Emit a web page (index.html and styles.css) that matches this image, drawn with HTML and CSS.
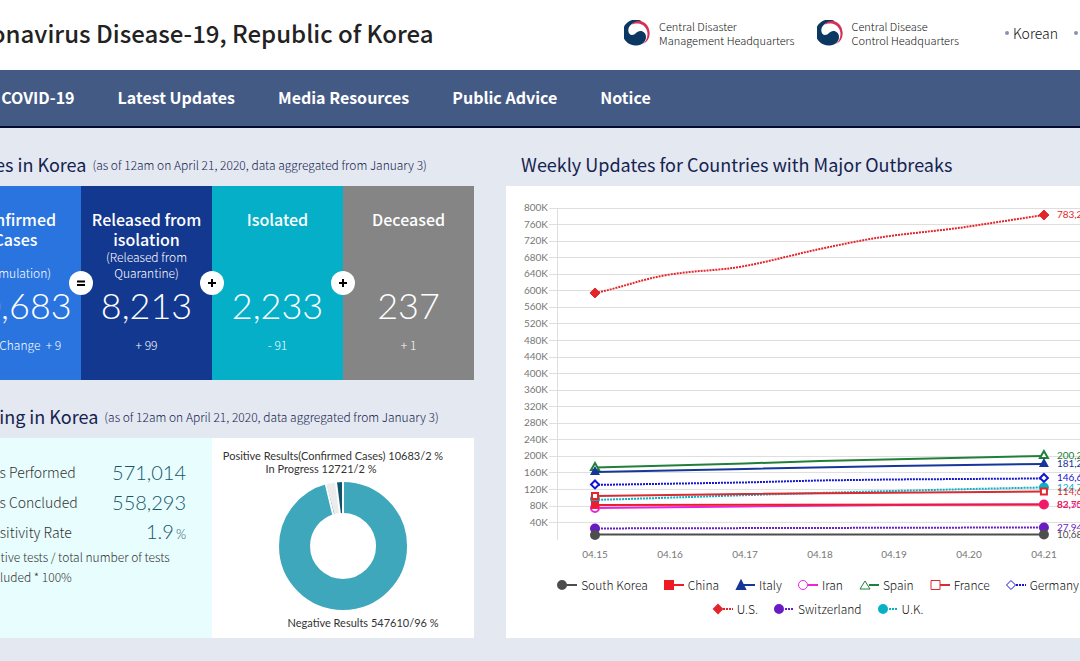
FILE: index.html
```html
<!DOCTYPE html>
<html lang="en">
<head>
<meta charset="utf-8">
<title>Coronavirus Disease-19, Republic of Korea</title>
<link rel="stylesheet" href="styles.css">
</head>
<body>
<svg class="defs" aria-hidden="true">
  <symbol id="taegeuk" viewBox="0 0 26 26">
    <path fill="#0b3763" d="M17 .7A13 13 0 1 0 12.500 25.500C18 25.500 22 21.500 22 17C22 13.500 19.500 11 16.300 11C12.500 11 11.500 15 8 15C6 15 4.300 13 4.300 10.500C4.300 5.500 9 2.200 13.500 2C15 1.500 16 1 17 .7Z"/>
    <path fill="#d62f56" d="M7.500 4.600C10 1.600 14 .7 17 .9A12.800 12.800 0 0 1 18.500 24.500C21.500 22 23.500 18.500 23.500 14C23.500 8 19 3.600 14 3.400C11.500 3.300 9 3.800 7.500 4.600Z"/>
  </symbol>
</svg>

<header class="top">
  <div class="wrap top-row">
    <h1>Coronavirus Disease-19, Republic of Korea</h1>
    <div class="agencies">
      <a class="agency" href="#"><svg><use href="#taegeuk"/></svg><span>Central Disaster<br>Management Headquarters</span></a>
      <a class="agency" href="#"><svg><use href="#taegeuk"/></svg><span>Central Disease<br>Control Headquarters</span></a>
    </div>
    <ul class="langs">
      <li><a href="#">Korean</a></li>
      <li><a href="#">Chinese</a></li>
    </ul>
  </div>
</header>

<nav class="nav">
  <div class="wrap nav-row">
    <a href="#">About COVID-19</a>
    <a href="#">Latest Updates</a>
    <a href="#">Media Resources</a>
    <a href="#">Public Advice</a>
    <a href="#">Notice</a>
  </div>
</nav>

<main class="wrap board">
  <div class="col">
    <section>
      <div class="heading"><h2>Cases in Korea</h2><p>(as of 12am on April 21, 2020, data aggregated from January 3)</p></div>
      <div class="cards">
        <article class="card blue">
          <div class="card-head"><h3>Confirmed<br>Cases</h3><p>(Cumulation)</p></div>
          <strong>10,683</strong><span>Daily Change &nbsp;+ 9</span>
          <svg class="op" viewBox="0 0 24 24"><path d="M8 10.500h8M8 14h8"/></svg>
        </article>
        <article class="card navy">
          <div class="card-head"><h3>Released from isolation</h3><p>(Released from Quarantine)</p></div>
          <strong>8,213</strong><span>+ 99</span>
          <svg class="op" viewBox="0 0 24 24"><path d="M8 12h8M12 8v8"/></svg>
        </article>
        <article class="card cyan">
          <div class="card-head"><h3>Isolated</h3></div>
          <strong>2,233</strong><span>- 91</span>
          <svg class="op" viewBox="0 0 24 24"><path d="M8 12h8M12 8v8"/></svg>
        </article>
        <article class="card gray">
          <div class="card-head"><h3>Deceased</h3></div>
          <strong>237</strong><span>+ 1</span>
        </article>
      </div>
    </section>

    <section>
      <div class="heading"><h2>Testing in Korea</h2><p>(as of 12am on April 21, 2020, data aggregated from January 3)</p></div>
      <div class="testing">
        <div class="tests">
          <dl>
            <div><dt>Tests Performed</dt><dd>571,014</dd></div>
            <div><dt>Tests Concluded</dt><dd>558,293</dd></div>
            <div><dt>* Positivity Rate</dt><dd>1.9<small>%</small></dd></div>
          </dl>
          <p>Postitive tests / total number of tests concluded * 100%</p>
        </div>
        <div class="donut">
          <svg viewBox="0 0 262 200" role="img" aria-label="Test results">
            <text x="121" y="22">Positive Results(Confirmed Cases) 10683/2 %</text>
            <text x="109" y="35">In Progress 12721/2 %</text>
            <g fill="none" stroke-width="31" transform="rotate(-90 131 108)">
              <circle cx="131" cy="108" r="48.500" stroke="#3ea7bb" pathLength="1000" stroke-dasharray="959 41"/>
              <circle cx="131" cy="108" r="48.500" stroke="#ececec" pathLength="1000" stroke-dasharray="0 959 23 18"/>
              <circle cx="131" cy="108" r="48.500" stroke="#0e5567" pathLength="1000" stroke-dasharray="0 982 18 0"/>
            </g>
            <path stroke="#fff" stroke-width="2" d="M131 77V43M128 77l-4-33M121.500 78l-8-33"/>
            <text x="151" y="189">Negative Results 547610/96 %</text>
          </svg>
        </div>
      </div>
    </section>
  </div>

  <section class="col weekly">
    <div class="heading"><h2>Weekly Updates for Countries with Major Outbreaks</h2></div>
    <div class="chart">
      <svg class="plot" viewBox="0 0 624 384" role="img" aria-label="Confirmed cases by country">
        <path class="grid" d="M43 22.500H600M43 38.500H600M43 55.500H600M43 71.500H600M43 88.500H600M43 104.500H600M43 121.500H600M43 137.500H600M43 154.500H600M43 171.500H600M43 187.500H600M43 204.500H600M43 220.500H600M43 237.500H600M43 253.500H600M43 270.500H600M43 286.500H600M43 303.500H600M43 320.500H600M43 336.500H600M51.500 22V354"/>
        <g class="ylab">
          <text x="42" y="25">800K</text><text x="42" y="42">760K</text><text x="42" y="58">720K</text><text x="42" y="75">680K</text>
          <text x="42" y="91">640K</text><text x="42" y="108">600K</text><text x="42" y="124">560K</text><text x="42" y="141">520K</text>
          <text x="42" y="158">480K</text><text x="42" y="174">440K</text><text x="42" y="191">400K</text><text x="42" y="207">360K</text>
          <text x="42" y="224">320K</text><text x="42" y="240">280K</text><text x="42" y="257">240K</text><text x="42" y="273">200K</text>
          <text x="42" y="290">160K</text><text x="42" y="307">120K</text><text x="42" y="323">80K</text><text x="42" y="340">40K</text>
        </g>
        <g class="xlab">
          <text x="89" y="372">04.15</text><text x="164" y="372">04.16</text><text x="239" y="372">04.17</text><text x="314" y="372">04.18</text>
          <text x="388" y="372">04.19</text><text x="463" y="372">04.20</text><text x="538" y="372">04.21</text>
        </g>
        <g class="line">
          <path class="dots" stroke="#08b1c4" d="M89 314C190 311 240 309 314 307S460 303 538 301.500"/>
          <path class="dots" stroke="#e3262c" d="M89 107C115 102 135 93 164 88.500S212 85 239 80S290 68 314 63S360 53 388 49.500S440 44 463 40.500L538 29"/>
          <path class="dots" stroke="#1414d2" d="M89 299L239 296.500L314 294.500L388 293.500L538 292.500"/>
          <path class="dots" stroke="#6a1cc4" d="M89 342.500L538 341.500"/>
          <path stroke="#20803a" d="M89 281.500L239 277.500L314 275L538 270"/>
          <path stroke="#16369a" d="M89 286L239 283L388 280L538 278"/>
          <path stroke="#d92b32" d="M89 310L239 308L538 305.500"/>
          <path stroke="#e625dd" d="M89 322L239 320.500L388 319L538 318.500"/>
          <path stroke="#ed1c2e" d="M89 319L538 318.500"/>
          <path stroke="#4d4d4d" d="M89 348.500H538"/>
        </g>
        <g stroke-width="2">
          <path fill="#e3262c" stroke="#e3262c" d="M89 102l5 5-5 5-5-5zM538 24l5 5-5 5-5-5z" stroke-width="1"/>
          <g fill="#08b1c4"><circle cx="89" cy="313" r="5"/><circle cx="538" cy="301.500" r="5"/></g>
          <path fill="#fff" stroke="#20803a" d="M89 277l4 7h-8zM538 265l4 7h-8z"/>
          <path fill="#16369a" d="M89 280l5 9H84zM538 272l5 9H533z"/>
          <path fill="#fff" stroke="#1414d2" d="M89 294.500l4 4-4 4-4-4zM538 288l4 4-4 4-4-4z"/>
          <circle cx="89" cy="322" r="4" fill="#fff" stroke="#e625dd"/><circle cx="538" cy="318.500" r="5" fill="#f31969"/>
          <path fill="#ed1c2e" d="M85 315h8v8H85z"/>
          <path fill="#fff" stroke="#e3262c" d="M86 307h6v6H86zM535 302.500h6v6H535z"/>
          <g fill="#6a1cc4"><circle cx="89" cy="342.500" r="5"/><circle cx="538" cy="341.500" r="5"/></g>
          <g fill="#4d4d4d"><circle cx="89" cy="349" r="5"/><circle cx="538" cy="348.500" r="5"/></g>
        </g>
        <g class="values">
          <text x="551" y="32" fill="#e3262c">783,290</text>
          <text x="551" y="273" fill="#20803a">200,210</text>
          <text x="551" y="281" fill="#16369a">181,228</text>
          <text x="551" y="295" fill="#1414d2">146,653</text>
          <text x="551" y="305" fill="#08b1c4">124,743</text>
          <text x="551" y="309" fill="#e3262c">114,657</text>
          <text x="551" y="322" fill="#e625dd">83,505</text>
          <text x="551" y="322" fill="#ed1c2e">82,758</text>
          <text x="551" y="345" fill="#6a1cc4">27,944</text>
          <text x="551" y="352" fill="#4d4d4d">10,683</text>
        </g>
      </svg>
      <ul class="legend">
        <li class="c-kr"><svg viewBox="0 0 20 12"><path d="M5 6h15"/><circle class="fill" cx="5" cy="6" r="4"/></svg>South Korea</li>
        <li class="c-cn"><svg viewBox="0 0 20 12"><path d="M5 6h15"/><path class="fill" d="M1 2h8v8H1z"/></svg>China</li>
        <li class="c-it"><svg viewBox="0 0 20 12"><path d="M5 6h15"/><path class="fill" d="M6 2l4 8H2z"/></svg>Italy</li>
        <li class="c-ir"><svg viewBox="0 0 20 12"><path d="M10 6h10"/><circle class="open" cx="5" cy="6" r="4.500"/></svg>Iran</li>
        <li class="c-es"><svg viewBox="0 0 20 12"><path d="M10 6h10"/><path class="open" d="M6 2l5 8H1z"/></svg>Spain</li>
        <li class="c-fr"><svg viewBox="0 0 20 12"><path d="M10 6h10"/><path class="open" d="M1 1.500h9v9H1z"/></svg>France</li>
        <li class="c-de"><svg viewBox="0 0 20 12"><path class="dash" d="M10 6h10"/><path class="open" d="M5 1.500L9.500 6 5 10.500.5 6z"/></svg>Germany</li>
        <li class="c-us"><svg viewBox="0 0 20 12"><path class="dash" d="M10 6h10"/><path class="fill" d="M5 2l4 4-4 4-4-4z"/></svg>U.S.</li>
        <li class="c-ch"><svg viewBox="0 0 20 12"><path class="dash" d="M11 6h9"/><circle class="fill" cx="5" cy="6" r="4"/></svg>Switzerland</li>
        <li class="c-uk"><svg viewBox="0 0 20 12"><path class="dash" d="M11 6h9"/><circle class="fill" cx="5" cy="6" r="4"/></svg>U.K.</li>
      </ul>
    </div>
  </section>
</main>
</body>
</html>
```
FILE: styles.css
```css
* { box-sizing: border-box; }
body {
  margin: 0;
  overflow: hidden;
  background: #e4e8f1;
  color: #111;
  font-family: "Noto Sans CJK KR", "Noto Sans", sans-serif;
}
h1, h2, h3, p, ul, dl, dd { margin: 0; padding: 0; }
ul { list-style: none; }
a { color: inherit; text-decoration: none; }
.defs { display: none; }
.wrap { margin: 0 -50px; }

.top { background: #fff; }
.top-row { display: flex; align-items: center; height: 70px; padding: 0 0 4px 1px; }
h1 { width: 673px; flex: none; color: #222; font-size: 24px; font-weight: 500; line-height: 36px; white-space: nowrap; }
.agencies { display: flex; gap: 22px; }
.agency { display: flex; align-items: center; gap: 9px; font-size: 11px; font-weight: 300; line-height: 14px; white-space: nowrap; }
.agency svg { width: 26px; height: 26px; }
.langs { display: flex; gap: 16px; margin-left: 46px; font-size: 14px; font-weight: 300; line-height: 20px; }
.langs li { display: flex; align-items: center; gap: 4px; }
.langs li::before { content: ""; width: 4px; height: 4px; border-radius: 50%; background: #8793b0; }

.nav { background: #435a85; border-bottom: 2px solid #020c2e; }
.nav-row { display: flex; align-items: center; gap: 43px; height: 56px; padding-bottom: 2px; color: #fff; font-size: 16px; font-weight: 700; white-space: nowrap; }

.board { display: grid; grid-template-columns: 21fr 25fr; gap: 32px; padding-top: 20px; }
.col { min-width: 0; }
.heading { display: flex; align-items: center; gap: 6px; height: 38px; padding: 0 0 6px 15px; color: #14234f; white-space: nowrap; }
h2 { font-size: 18px; font-weight: 400; }
.heading p { font-size: 12px; font-weight: 300; }

.cards { display: grid; grid-template-columns: repeat(4, minmax(0, 1fr)); margin-bottom: 20px; }
.card { position: relative; display: flex; flex-direction: column; align-items: center; height: 194px; padding: 23px 8px; color: #fff; text-align: center; }
.blue { background: #2a74e0; }
.navy { background: #13388f; }
.cyan { background: #05afc8; }
.gray { background: #858585; }
.card-head { display: flex; flex-direction: column; justify-content: space-between; height: 72px; }
h3 { font-size: 16px; font-weight: 500; line-height: 20px; }
.card-head p { padding: 0 8px; font-size: 12px; line-height: 16px; font-weight: 300; }
.card strong { font: 300 36px/48px Lato, sans-serif; }
.card span { margin-top: 6px; font-size: 12px; line-height: 20px; font-weight: 300; white-space: nowrap; }
.op { position: absolute; z-index: 1; top: 85px; right: -12px; width: 24px; height: 24px; border-radius: 50%; background: #fff; stroke: #000; stroke-width: 2; }

.testing { display: grid; grid-template-columns: 1fr 1fr; height: 200px; background: #fff; }
.tests { padding: 19px 24px; background: #e8fdfe; color: #333; font-weight: 300; }
.tests dl div { display: flex; justify-content: space-between; align-items: center; height: 30px; }
.tests dt { font-size: 14px; }
.tests dd { padding-right: 2px; color: #17566a; font: 300 20px/30px Lato, sans-serif; }
.tests small { margin-left: 2px; font-size: 13px; }
.tests p { font-size: 12px; line-height: 20px; }
.donut svg { display: block; width: 100%; }
.donut text { fill: #333; font: 400 11px Lato, sans-serif; text-anchor: middle; }

.chart { height: 452px; background: #fff; }
.plot { display: block; width: 100%; }
.grid { stroke: #dedede; }
.ylab, .xlab { fill: #777; font: 400 10px Lato, sans-serif; text-anchor: end; }
.xlab { text-anchor: middle; }
.line { fill: none; stroke-width: 2; }
.dots { stroke-dasharray: 2 1; }
.values { font: 400 10px Lato, sans-serif; }
.legend { display: flex; flex-wrap: wrap; justify-content: center; column-gap: 16px; padding: 3px 40px; font-size: 12px; font-weight: 300; line-height: 24px; }
.legend li { display: flex; align-items: center; gap: 4px; }
.legend svg { width: 20px; height: 12px; overflow: visible; fill: none; stroke: currentColor; stroke-width: 2; }
.legend .fill { fill: currentColor; }
.legend .open { fill: #fff; stroke-width: 1; }
.legend .dash { stroke-dasharray: 2 1; }
.c-kr svg { color: #4d4d4d; }
.c-cn svg { color: #ed1c24; }
.c-it svg { color: #16369a; }
.c-ir svg { color: #e625dd; }
.c-es svg { color: #20803a; }
.c-fr svg { color: #d92b32; }
.c-de svg { color: #1414d2; }
.c-us svg { color: #e3262c; }
.c-ch svg { color: #6a1cc4; }
.c-uk svg { color: #08b1c4; }
```
